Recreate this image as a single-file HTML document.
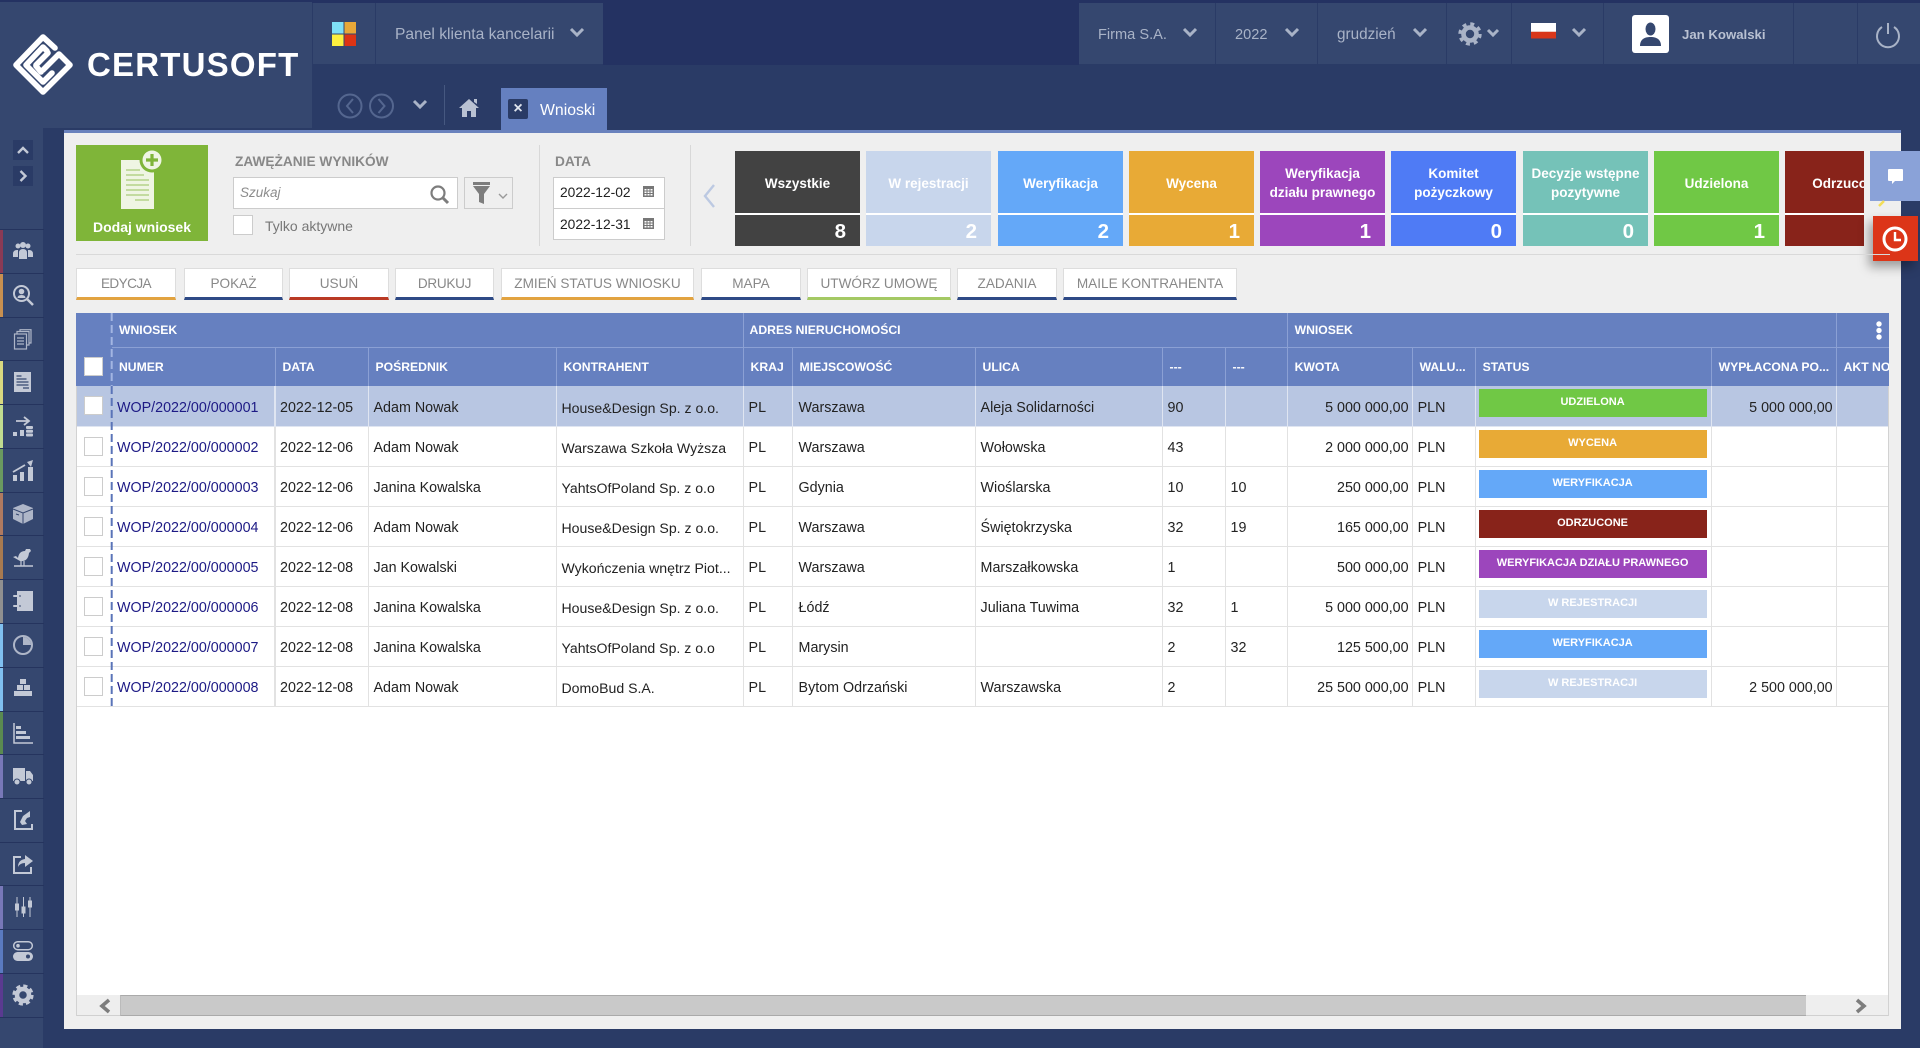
<!DOCTYPE html>
<html lang="pl"><head><meta charset="utf-8"><title>Wnioski</title>
<style>
*{box-sizing:border-box}
html,body{margin:0;padding:0;width:1920px;height:1048px;overflow:hidden;background:#2a3b66;font-family:"Liberation Sans",sans-serif}
.a{position:absolute}
.t{position:absolute;white-space:nowrap}
.c{position:absolute;top:3px;height:62px;background:#35476f;border-bottom:1px solid #2a3b66}
.h{color:#a9b3c7;font-size:15.6px;line-height:18px;top:26px}
.tile{position:absolute;top:151px;height:95px;width:125px;color:#fff;overflow:hidden}
.tile div.l{position:absolute;left:0;right:0;top:1px;height:62px;display:flex;align-items:center;justify-content:center;text-align:center;font-weight:bold;font-size:13.5px;line-height:19px}
.tile div.n{position:absolute;left:0;right:14px;top:66px;height:30px;text-align:right;font-weight:bold;font-size:20.5px;line-height:30px}
.tile i{position:absolute;left:0;right:0;top:62px;height:2px;background:#fff}
.b{position:absolute;top:268px;height:32px;background:#fff;border:1px solid #ddd;border-bottom:3px solid #2e4a86;color:#888;font-size:13.6px;text-align:center;line-height:30px;white-space:nowrap}
table{border-collapse:collapse;table-layout:fixed;width:1813px;position:absolute;left:0;top:0;font-size:14.3px;color:#222}
td,th{padding:0;overflow:hidden;white-space:nowrap}
.gh th{height:34px;background:#6680c0;color:#fff;text-align:left;font-size:12.2px;padding-left:7px;border-right:1px solid #8ba0d4;border-bottom:1px solid #8ba0d4}
.ch th{height:39px;background:#6680c0;color:#fff;text-align:left;font-size:12.2px;padding-left:7px;border-right:1px solid #8ba0d4}
tbody td{height:40px;padding:4px 0 0 5px;border-right:1px solid #e2e2e2;border-bottom:1px solid #e2e2e2;background:#fff}
tbody td:first-child{padding-top:0}
tbody tr.s td{background:#b8c6e2;border-color:#dfe5f1}
tbody td:nth-child(2){border-right-width:2px}
tbody td:nth-child(3){padding-left:4px}
tbody td:nth-child(5){font-size:14.1px}
tbody td:nth-child(7){padding-left:6px}
td.r{text-align:right;padding:4px 3px 0 0 !important}
td a{color:#1d1a85;text-decoration:none}
.cb{display:block;width:19px;height:19px;background:#fff;border:1px solid #ccc;margin-left:3px}
td.st{padding:0 0 0 3px !important;vertical-align:top}
.st span{display:block;width:228px;height:28px;margin-top:3px;color:#fff;text-align:center;font-weight:bold;font-size:11px;line-height:27px}
</style></head><body>

<!-- header -->
<div class="a" style="left:603px;top:0;width:476px;height:65px;background:#243262"></div>
<div class="a" style="left:0;top:0;width:1920px;height:3px;background:#243262"></div>
<div class="a" style="left:0;top:2px;width:312px;height:126px;background:#35476f"></div>
<div class="c" style="left:313px;width:62px"></div>
<div class="c" style="left:376px;width:227px"></div>
<div class="c" style="left:1079px;width:136px"></div>
<div class="c" style="left:1216px;width:101px"></div>
<div class="c" style="left:1318px;width:128px"></div>
<div class="c" style="left:1447px;width:64px"></div>
<div class="c" style="left:1512px;width:91px"></div>
<div class="c" style="left:1604px;width:189px"></div>
<div class="c" style="left:1794px;width:63px"></div>
<div class="c" style="left:1858px;width:62px"></div>

<svg class="a" style="left:0;top:30px" width="90" height="70" viewBox="0 30 90 70" fill="none" stroke="#fff" stroke-width="5.6" stroke-linejoin="round" stroke-linecap="round">
<path d="M55 48 43 37 16 65 43 92 70 65 59 54 43 70"/>
<path d="M47 51 43 47 26 65 43 82 52 73"/>
<path d="M36 65 48 53"/><path d="M41 72 36 66"/>
</svg>
<div class="t" style="left:87px;top:46px;font-size:33px;line-height:38px;font-weight:bold;color:#fff;letter-spacing:1.2px">CERTUSOFT</div>

<svg class="a" style="left:332px;top:22px" width="24" height="24"><rect width="11.5" height="11.5" fill="#7fe0f6"/><rect x="12.5" width="11.5" height="11.5" fill="#e8a838"/><rect y="12.5" width="11.5" height="11.5" fill="#fdf03f"/><rect x="12.5" y="12.5" width="11.5" height="11.5" fill="#dc3414"/></svg>
<div class="t h" style="left:395px">Panel klienta kancelarii</div>

<div class="t h" style="left:1098px;font-size:14.6px">Firma S.A.</div>
<div class="t h" style="left:1235px;font-size:14.6px">2022</div>
<div class="t h" style="left:1337px;font-size:15.3px">grudzień</div>
<div class="t h" style="left:1682px;font-size:13.2px;font-weight:bold;color:#b9c1d2">Jan Kowalski</div>

<svg class="a" style="left:0;top:0" width="1920" height="130" fill="none" stroke="#a9b3c7" stroke-width="3">
<path d="M571 29l6 6 6-6M1184 29l6 6 6-6M1286 29l6 6 6-6M1414 29l6 6 6-6M1488 30l5 5 5-5M1573 29l6 6 6-6"/>
<!-- gear -->
<circle cx="1470" cy="34" r="6.5" stroke-width="4.6"/>
<circle cx="1470" cy="34" r="10" stroke-width="3.4" stroke-dasharray="3.9 3.95"/>
<!-- flag -->
<rect x="1531" y="23" width="25" height="8" fill="#fff" stroke="none"/><rect x="1531" y="31" width="25" height="1" fill="#eecbc0" stroke="none"/><rect x="1531" y="32" width="25" height="6.5" fill="#d8371a" stroke="none"/>
<!-- user -->
<rect x="1632" y="15" width="37" height="38" rx="3" fill="#fff" stroke="none"/>
<ellipse cx="1650.500" cy="29" rx="5" ry="6.500" fill="#35476f" stroke="none"/><path d="M1640 46c0-7 5-9 10.500-9s10.500 2 10.500 9z" fill="#35476f" stroke="none"/>
<!-- power -->
<path d="M1882 27a11 11 0 1 0 12 0" stroke-width="2"/><path d="M1888 23v11" stroke-width="2"/>
<!-- nav -->
<g stroke="#54668f" stroke-width="2"><circle cx="350" cy="106" r="11.500"/><circle cx="381.500" cy="106" r="11.500"/><path d="M353 99l-6 7 6 7M378.500 99l6 7-6 7"/></g>
<path d="M414 101l6 6 6-6"/>
<path d="M444.500 85v40" stroke="#465880" stroke-width="1"/>
<path d="M459 108l10-9 10 9h-3v9h-5v-6h-4v6h-5v-9z" fill="#b9c1d2" stroke="none"/><path d="M474 99h3v5l-3-2z" fill="#b9c1d2" stroke="none"/>
</svg>

<div class="a" style="left:501px;top:88px;width:106px;height:42px;background:#6580c0"></div>
<div class="a" style="left:508px;top:99px;width:20px;height:20px;background:#2a3b66;border-radius:2px;color:#dfe4ee;font-weight:bold;font-size:16px;line-height:19px;text-align:center">×</div>
<div class="t" style="left:540px;top:102px;font-size:15.8px;line-height:18px;color:#fff">Wnioski</div>

<!-- sidebar -->
<div class="a" style="left:0;top:128px;width:44px;height:920px;background:#35476f;border-right:1px solid #2a3b66"></div>
<div class="a" style="left:13px;top:140px;width:20px;height:20px;background:#2a3b66"></div>
<div class="a" style="left:13px;top:166px;width:20px;height:20px;background:#2a3b66"></div>
<svg class="a" style="left:0;top:128px" width="44" height="920" viewBox="0 128 44 920" fill="#c3c9d6" stroke="none">
<path d="M18 153l5-5 5 5M20.500 171l5 5-5 5" fill="none" stroke="#c3c9d6" stroke-width="2.400"/>
<g fill="none" stroke="#25345e" stroke-width="1">
<path d="M0 229.500h44M0 273.500h44M0 317.500h44M0 360.500h44M0 404.500h44M0 448.500h44M0 492.500h44M0 535.500h44M0 579.500h44M0 623.500h44M0 667.500h44M0 711.500h44M0 754.500h44M0 798.500h44M0 842.500h44M0 885.500h44M0 929.500h44M0 973.500h44M0 1017.500h44"/></g>
<g>
<rect x="0" y="230" width="3" height="43" fill="#8a3a55"/><rect x="0" y="274" width="3" height="43" fill="#c89050"/>
<rect x="0" y="361" width="3" height="43" fill="#d8d880"/><rect x="0" y="405" width="3" height="43" fill="#c0dc90"/>
<rect x="0" y="449" width="3" height="43" fill="#6a9a60"/><rect x="0" y="493" width="3" height="42" fill="#b07a60"/>
<rect x="0" y="536" width="3" height="43" fill="#a87a50"/><rect x="0" y="580" width="3" height="43" fill="#909090"/>
<rect x="0" y="624" width="3" height="43" fill="#80c0f0"/><rect x="0" y="668" width="3" height="43" fill="#80c0f0"/>
<rect x="0" y="712" width="3" height="42" fill="#5a8a50"/><rect x="0" y="755" width="3" height="43" fill="#7878b8"/>
<rect x="0" y="886" width="3" height="43" fill="#7878b8"/><rect x="0" y="930" width="3" height="43" fill="#5a7ac0"/>
<rect x="0" y="974" width="3" height="43" fill="#5a3a90"/>
</g>
<!-- 1 people -->
<g transform="translate(13 241)"><circle cx="5" cy="5" r="2.500"/><circle cx="15" cy="5" r="2.500"/><circle cx="10" cy="4" r="3"/><path d="M0 16v-3q0-4 4-4h1v7zM20 16v-3q0-4-4-4h-1v7zM6 18v-6q0-4 4-4t4 4v6z"/></g>
<!-- 2 search -->
<g transform="translate(13 285)"><circle cx="8.500" cy="8.500" r="7.500" fill="none" stroke="#c3c9d6" stroke-width="2"/><circle cx="8.500" cy="6.500" r="2.800"/><path d="M4.500 13q0-3 4-3t4 3z"/><path d="M14 14l6 6" stroke="#c3c9d6" stroke-width="2.500"/></g>
<!-- 3 docs -->
<g transform="translate(14 329)" fill="none" stroke="#aeb6c8" stroke-width="1.200"><rect x="0.500" y="5" width="12" height="15"/><path d="M3 5V2.500h12V16h-2M6 2.500V.7h11V14h-2M3 9h7M3 12h7M3 15h7"/></g>
<!-- 4 doc -->
<g transform="translate(14 372)"><rect width="17" height="20"/><path d="M2.500 4h5M2.500 7h10M2.500 10h12M2.500 13h12M9 16h6" stroke="#35476f" stroke-width="1.200"/></g>
<!-- 5 arrow db -->
<g transform="translate(13 416)"><path d="M3 5h13M11 1l5 4-5 4" fill="none" stroke="#c3c9d6" stroke-width="1.800"/><rect y="16" width="4" height="4"/><rect x="7" y="14" width="4" height="6"/><rect x="13" y="10" width="7" height="3" rx="1"/><rect x="13" y="13.800" width="7" height="3" rx="1"/><rect x="13" y="17.500" width="7" height="3" rx="1"/></g>
<!-- 6 chart -->
<g transform="translate(13 460)"><rect y="15" width="4" height="6"/><rect x="7" y="12" width="4" height="9"/><rect x="15" y="7" width="5" height="14"/><path d="M0 12 12 5" stroke="#c3c9d6" stroke-width="1.800"/><path d="M20 0l-6 2 4 5z"/></g>
<!-- 7 box -->
<g transform="translate(13 504)" fill="#aeb6c8"><path d="M10 0l10 4v11l-10 5-10-5V4z"/><path d="M0 5l10 4 10-4M10 9v11M3 10l3 1" fill="none" stroke="#35476f" stroke-width="1"/></g>
<!-- 8 bird -->
<g transform="translate(13 547)"><path d="M5 11q1-7 7-7l1-2h4l1 2-2 2q-1 9-9 8l-7-4 3-1z"/><path d="M1 19h19" stroke="#c3c9d6" stroke-width="1.500"/><path d="M8 14v5M11 14v5" stroke="#c3c9d6" stroke-width="1.200"/></g>
<!-- 9 notebook -->
<g transform="translate(13 591)"><rect x="4" width="16" height="20"/><path d="M1 5h6M1 15h6" fill="none" stroke="#c3c9d6" stroke-width="2" stroke-linecap="round"/><path d="M6 5h2M6 15h2" stroke="#35476f" stroke-width="1"/></g>
<!-- 10 pie -->
<g transform="translate(13 635)" fill="#aeb6c8"><circle cx="10" cy="10" r="9" fill="none" stroke="#aeb6c8" stroke-width="2"/><path d="M10 10V2a8 8 0 0 1 8 8z"/></g>
<!-- 11 pyramid -->
<g transform="translate(14 679)"><rect x="6" y="0" width="6" height="5"/><rect x="3" y="6" width="6" height="5"/><rect x="10" y="6" width="6" height="5"/><rect x="0" y="12" width="18" height="5"/></g>
<!-- 12 hbar -->
<g transform="translate(13 723)"><path d="M1 0v20h19" fill="none" stroke="#c3c9d6" stroke-width="1.500"/><rect x="3" y="3" width="5" height="3"/><rect x="3" y="8" width="10" height="3"/><rect x="3" y="13" width="14" height="3"/></g>
<!-- 13 truck -->
<g transform="translate(13 766)"><rect y="2" width="12" height="13"/><path d="M13 5h4l3 4v6h-7z"/><circle cx="4" cy="16" r="3" stroke="#35476f"/><circle cx="16" cy="16" r="3" stroke="#35476f"/></g>
<!-- 14 in -->
<g transform="translate(14 810)"><path d="M8 1H1v18h17v-5" fill="none" stroke="#c3c9d6" stroke-width="2"/><path d="M16 1 9 6l-3 6 2 3 5-1-2-3 2-3 3-1z"/></g>
<!-- 15 out -->
<g transform="translate(13 854)"><path d="M8 3H1v16h17v-6" fill="none" stroke="#c3c9d6" stroke-width="2"/><path d="M12 1l8 6-8 6V9q-5 0-7 4 0-7 7-8z"/></g>
<!-- 16 sliders -->
<g transform="translate(14 897)" stroke="#c3c9d6" stroke-width="1"><path d="M3 0v20M9.500 0v20M16 0v20"/><rect x="1.500" y="7" width="3" height="6"/><rect x="8" y="10" width="3" height="6"/><rect x="14.500" y="4" width="3" height="6"/></g>
<!-- 17 toggles -->
<g transform="translate(13 941)"><rect x=".7" y=".7" width="18.600" height="8" rx="4" fill="none" stroke="#c3c9d6" stroke-width="1.500"/><circle cx="5" cy="4.700" r="1.800"/><rect y="11" width="20" height="9" rx="4.500"/><circle cx="15" cy="15.500" r="2" fill="#35476f"/></g>
<!-- 18 gear -->
<g transform="translate(23 995)" fill="none" stroke="#c3c9d6"><circle r="6" stroke-width="4.500"/><circle r="8.800" stroke-width="3.600" stroke-dasharray="4 2.910"/></g>
</svg>

<!-- content -->
<div class="a" style="left:64px;top:130px;width:1837px;height:899px;background:#efefef;border-top:3px solid #6a82bd"></div>

<!-- add -->
<div class="a" style="left:76px;top:145px;width:132px;height:96px;background:#7fb539"></div>
<svg class="a" style="left:76px;top:145px" width="132" height="96">
<rect x="45" y="15" width="33" height="49" fill="#eff5e3"/>
<path d="M50 25h14M50 30h18M50 35h23M50 40h23M50 45h23M50 50h23M59 55h14" stroke="#a9cc78" stroke-width="1.300"/>
<circle cx="76" cy="15" r="12.500" fill="#7fb539"/><circle cx="76" cy="15" r="9.500" fill="#eff5e3"/>
<path d="M76 9v12M70 15h12" stroke="#7fb539" stroke-width="3.200"/>
</svg>
<div class="t" style="left:76px;width:132px;top:218px;text-align:center;font-size:14px;font-weight:bold;color:#fff;line-height:18px">Dodaj wniosek</div>

<div class="t" style="left:235px;top:154px;font-size:13.700px;font-weight:bold;color:#888;line-height:16px">ZAWĘŻANIE WYNIKÓW</div>
<div class="a" style="left:233px;top:177px;width:225px;height:32px;background:#fff;border:1px solid #ccc"></div>
<div class="t" style="left:240px;top:185px;font-size:13.500px;font-style:italic;color:#8c8c8c;line-height:16px">Szukaj</div>
<svg class="a" style="left:429px;top:184px" width="22" height="22" fill="none" stroke="#7d7d7d"><circle cx="9" cy="9" r="6.500" stroke-width="2.200"/><path d="M14 14l5 5" stroke-width="3"/></svg>
<div class="a" style="left:464px;top:177px;width:49px;height:32px;background:#efefef;border:1px solid #ccc"></div>
<svg class="a" style="left:470px;top:182px" width="40" height="24"><path d="M3 0h17v3H3zM3 4h17l-6 8v10l-5-2v-8z" fill="#7d7d7d"/><path d="M29 12l4 4 4-4" fill="none" stroke="#999" stroke-width="1.400"/></svg>
<div class="a" style="left:233px;top:215px;width:20px;height:20px;background:#fff;border:1px solid #ccc"></div>
<div class="t" style="left:265px;top:217px;font-size:14px;color:#777;line-height:18px">Tylko aktywne</div>

<div class="a" style="left:539px;top:145px;width:1px;height:101px;background:#d8d8d8"></div>
<div class="t" style="left:555px;top:154px;font-size:13.700px;font-weight:bold;color:#888;line-height:16px">DATA</div>
<div class="a" style="left:553px;top:177px;width:112px;height:32px;background:#fff;border:1px solid #ccc"></div>
<div class="a" style="left:553px;top:208px;width:112px;height:32px;background:#fff;border:1px solid #ccc"></div>
<div class="t" style="left:560px;top:184px;font-size:13.800px;color:#222;line-height:17px">2022-12-02</div>
<div class="t" style="left:560px;top:216px;font-size:13.800px;color:#222;line-height:17px">2022-12-31</div>
<svg class="a" style="left:643px;top:186px" width="11" height="44" fill="#777"><path d="M0 0h11v11H0zM1.500 3v1.500h2V3zm3 0v1.500h2V3zm3 0v1.500h2V3zM1.500 5.500V7h2V5.500zm3 0V7h2V5.500zm3 0V7h2V5.500zM1.500 8v1.500h2V8zm3 0v1.500h2V8zm3 0v1.500h2V8z" fill-rule="evenodd"/><path transform="translate(0 32)" d="M0 0h11v11H0zM1.500 3v1.500h2V3zm3 0v1.500h2V3zm3 0v1.500h2V3zM1.500 5.500V7h2V5.500zm3 0V7h2V5.500zm3 0V7h2V5.500zM1.500 8v1.500h2V8zm3 0v1.500h2V8zm3 0v1.500h2V8z" fill-rule="evenodd"/></svg>

<div class="a" style="left:690px;top:145px;width:1px;height:101px;background:#d8d8d8"></div>
<svg class="a" style="left:702px;top:184px" width="14" height="24"><path d="M12 1 3 12l9 11" fill="none" stroke="#bcc9e2" stroke-width="2.400"/></svg>

<!-- tiles -->
<div class="tile" style="left:735px;background:#424242"><div class="l">Wszystkie</div><i></i><div class="n">8</div></div>
<div class="tile" style="left:866px;background:#c8d6ec"><div class="l">W rejestracji</div><i></i><div class="n">2</div></div>
<div class="tile" style="left:998px;background:#64a8f8"><div class="l">Weryfikacja</div><i></i><div class="n">2</div></div>
<div class="tile" style="left:1129px;background:#e8aa36"><div class="l">Wycena</div><i></i><div class="n">1</div></div>
<div class="tile" style="left:1260px;background:#9c46bc"><div class="l">Weryfikacja<br>działu prawnego</div><i></i><div class="n">1</div></div>
<div class="tile" style="left:1391px;background:#4f7bf5"><div class="l">Komitet<br>pożyczkowy</div><i></i><div class="n">0</div></div>
<div class="tile" style="left:1523px;background:#75c2b8"><div class="l">Decyzje wstępne<br>pozytywne</div><i></i><div class="n">0</div></div>
<div class="tile" style="left:1654px;background:#70c845"><div class="l">Udzielona</div><i></i><div class="n">1</div></div>
<div class="a" style="left:1785px;top:151px;width:79px;height:95px;overflow:hidden"><div class="tile" style="left:0;top:0;background:#88231a"><div class="l">Odrzucone</div><i></i></div></div>

<div class="a" style="left:1870px;top:151px;width:50px;height:50px;background:#8aa2d8"></div>
<svg class="a" style="left:1888px;top:169px" width="16" height="16"><path d="M1 0h13a1 1 0 0 1 1 1v10a1 1 0 0 1-1 1H7l-3 3v-3H1a1 1 0 0 1-1-1V1a1 1 0 0 1 1-1z" fill="#fff"/></svg>
<svg class="a" style="left:1877px;top:200px" width="10" height="8"><path d="M2 6l5-5" stroke="#f3de57" stroke-width="2.500"/></svg>
<div class="a" style="left:1873px;top:216px;width:45px;height:45px;background:#dc3518;box-shadow:-4px 6px 10px rgba(0,0,0,.35)"></div>
<svg class="a" style="left:1881px;top:225px" width="28" height="28" fill="none" stroke="#fff"><circle cx="14" cy="14" r="11" stroke-width="3"/><path d="M14 7v8h6" stroke-width="2.400"/></svg>

<div class="a" style="left:76px;top:254px;width:1814px;height:1px;background:#d9d9d9"></div>

<!-- buttons -->
<div class="b" style="left:76px;width:100px;border-bottom-color:#e2a340;letter-spacing:-.6px">EDYCJA</div>
<div class="b" style="left:184px;width:99px">POKAŻ</div>
<div class="b" style="left:289px;width:100px;border-bottom-color:#b93a24">USUŃ</div>
<div class="b" style="left:395px;width:99px;letter-spacing:-.3px">DRUKUJ</div>
<div class="b" style="left:501px;width:193px;border-bottom-color:#e2a340">ZMIEŃ STATUS WNIOSKU</div>
<div class="b" style="left:701px;width:100px">MAPA</div>
<div class="b" style="left:807px;width:144px;border-bottom-color:#a4c964">UTWÓRZ UMOWĘ</div>
<div class="b" style="left:957px;width:100px">ZADANIA</div>
<div class="b" style="left:1063px;width:174px">MAILE KONTRAHENTA</div>

<!-- table -->
<div class="a" style="left:76px;top:313px;width:1813px;height:703px;background:#fff;overflow:hidden">
<table>
<colgroup><col style="width:36px"><col style="width:163px"><col style="width:93px"><col style="width:188px"><col style="width:187px"><col style="width:49px"><col style="width:183px"><col style="width:187px"><col style="width:63px"><col style="width:62px"><col style="width:125px"><col style="width:63px"><col style="width:236px"><col style="width:125px"><col style="width:53px"></colgroup>
<thead>
<tr class="gh"><th style="border-right:0;border-bottom:0"></th><th colspan="4">WNIOSEK</th><th colspan="5" style="padding-left:6px">ADRES NIERUCHOMOŚCI</th><th colspan="4">WNIOSEK</th><th style="border-right:0"></th></tr>
<tr class="ch"><th style="border-right:0;padding-left:8px"><span class="cb" style="margin-left:0"></span></th><th>NUMER</th><th>DATA</th><th>POŚREDNIK</th><th>KONTRAHENT</th><th>KRAJ</th><th>MIEJSCOWOŚĆ</th><th>ULICA</th><th>---</th><th>---</th><th>KWOTA</th><th>WALU...</th><th>STATUS</th><th>WYPŁACONA PO...</th><th style="border-right:0">AKT NOTARIALNY</th></tr>
</thead>
<tbody>
<tr class="s"><td style="border-right:0"><span class="cb"></span></td><td><a href="#">WOP/2022/00/000001</a></td><td>2022-12-05</td><td>Adam Nowak</td><td>House&amp;Design Sp. z o.o.</td><td>PL</td><td>Warszawa</td><td>Aleja Solidarności</td><td>90</td><td></td><td class="r">5 000 000,00</td><td>PLN</td><td class="st"><span style="background:#70c845">UDZIELONA</span></td><td class="r">5 000 000,00</td><td></td></tr>
<tr><td style="border-right:0"><span class="cb"></span></td><td><a href="#">WOP/2022/00/000002</a></td><td>2022-12-06</td><td>Adam Nowak</td><td>Warszawa Szkoła Wyższa</td><td>PL</td><td>Warszawa</td><td>Wołowska</td><td>43</td><td></td><td class="r">2 000 000,00</td><td>PLN</td><td class="st"><span style="background:#e8aa36">WYCENA</span></td><td></td><td></td></tr>
<tr><td style="border-right:0"><span class="cb"></span></td><td><a href="#">WOP/2022/00/000003</a></td><td>2022-12-06</td><td>Janina Kowalska</td><td>YahtsOfPoland Sp. z o.o</td><td>PL</td><td>Gdynia</td><td>Wioślarska</td><td>10</td><td>10</td><td class="r">250 000,00</td><td>PLN</td><td class="st"><span style="background:#64a8f8">WERYFIKACJA</span></td><td></td><td></td></tr>
<tr><td style="border-right:0"><span class="cb"></span></td><td><a href="#">WOP/2022/00/000004</a></td><td>2022-12-06</td><td>Adam Nowak</td><td>House&amp;Design Sp. z o.o.</td><td>PL</td><td>Warszawa</td><td>Świętokrzyska</td><td>32</td><td>19</td><td class="r">165 000,00</td><td>PLN</td><td class="st"><span style="background:#88231a">ODRZUCONE</span></td><td></td><td></td></tr>
<tr><td style="border-right:0"><span class="cb"></span></td><td><a href="#">WOP/2022/00/000005</a></td><td>2022-12-08</td><td>Jan Kowalski</td><td>Wykończenia wnętrz Piot...</td><td>PL</td><td>Warszawa</td><td>Marszałkowska</td><td>1</td><td></td><td class="r">500 000,00</td><td>PLN</td><td class="st"><span style="background:#9c46bc">WERYFIKACJA DZIAŁU PRAWNEGO</span></td><td></td><td></td></tr>
<tr><td style="border-right:0"><span class="cb"></span></td><td><a href="#">WOP/2022/00/000006</a></td><td>2022-12-08</td><td>Janina Kowalska</td><td>House&amp;Design Sp. z o.o.</td><td>PL</td><td>Łódź</td><td>Juliana Tuwima</td><td>32</td><td>1</td><td class="r">5 000 000,00</td><td>PLN</td><td class="st"><span style="background:#c8d6ec">W REJESTRACJI</span></td><td></td><td></td></tr>
<tr><td style="border-right:0"><span class="cb"></span></td><td><a href="#">WOP/2022/00/000007</a></td><td>2022-12-08</td><td>Janina Kowalska</td><td>YahtsOfPoland Sp. z o.o</td><td>PL</td><td>Marysin</td><td></td><td>2</td><td>32</td><td class="r">125 500,00</td><td>PLN</td><td class="st"><span style="background:#64a8f8">WERYFIKACJA</span></td><td></td><td></td></tr>
<tr><td style="border-right:0"><span class="cb"></span></td><td><a href="#">WOP/2022/00/000008</a></td><td>2022-12-08</td><td>Adam Nowak</td><td>DomoBud S.A.</td><td>PL</td><td>Bytom Odrzański</td><td>Warszawska</td><td>2</td><td></td><td class="r">25 500 000,00</td><td>PLN</td><td class="st"><span style="background:#c8d6ec">W REJESTRACJI</span></td><td class="r">2 500 000,00</td><td></td></tr>
</tbody></table>
</div>
<svg class="a" style="left:110px;top:313px" width="3" height="394"><path d="M1.700 0v73" stroke="#a3b5e2" stroke-width="2" stroke-dasharray="8 4"/><path d="M1.700 73v321" stroke="#5a74b8" stroke-width="2" stroke-dasharray="8 4"/></svg>
<svg class="a" style="left:1874px;top:321px" width="10" height="20" fill="#fff"><circle cx="5" cy="3" r="2.700"/><circle cx="5" cy="9.500" r="2.700"/><circle cx="5" cy="16" r="2.700"/></svg>

<!-- scroll -->
<div class="a" style="left:77px;top:995px;width:1811px;height:21px;background:#eee;border-bottom:1px solid #d0d0d0"></div>
<div class="a" style="left:120px;top:995px;width:1686px;height:21px;background:#c9c9c9;border-top:1px solid #aaa;border-bottom:1px solid #aaa;border-left:1px solid #bbb"></div>
<div class="a" style="left:76px;top:386px;width:1px;height:630px;background:#d2d2d2"></div>
<div class="a" style="left:1888px;top:386px;width:1px;height:630px;background:#d2d2d2"></div>
<svg class="a" style="left:98px;top:998px" width="14" height="16"><path d="M11 2 4 8l7 6" fill="none" stroke="#7d7d7d" stroke-width="3.600"/></svg>
<svg class="a" style="left:1854px;top:998px" width="14" height="16"><path d="M3 2l7 6-7 6" fill="none" stroke="#7d7d7d" stroke-width="3.600"/></svg>

</body></html>
